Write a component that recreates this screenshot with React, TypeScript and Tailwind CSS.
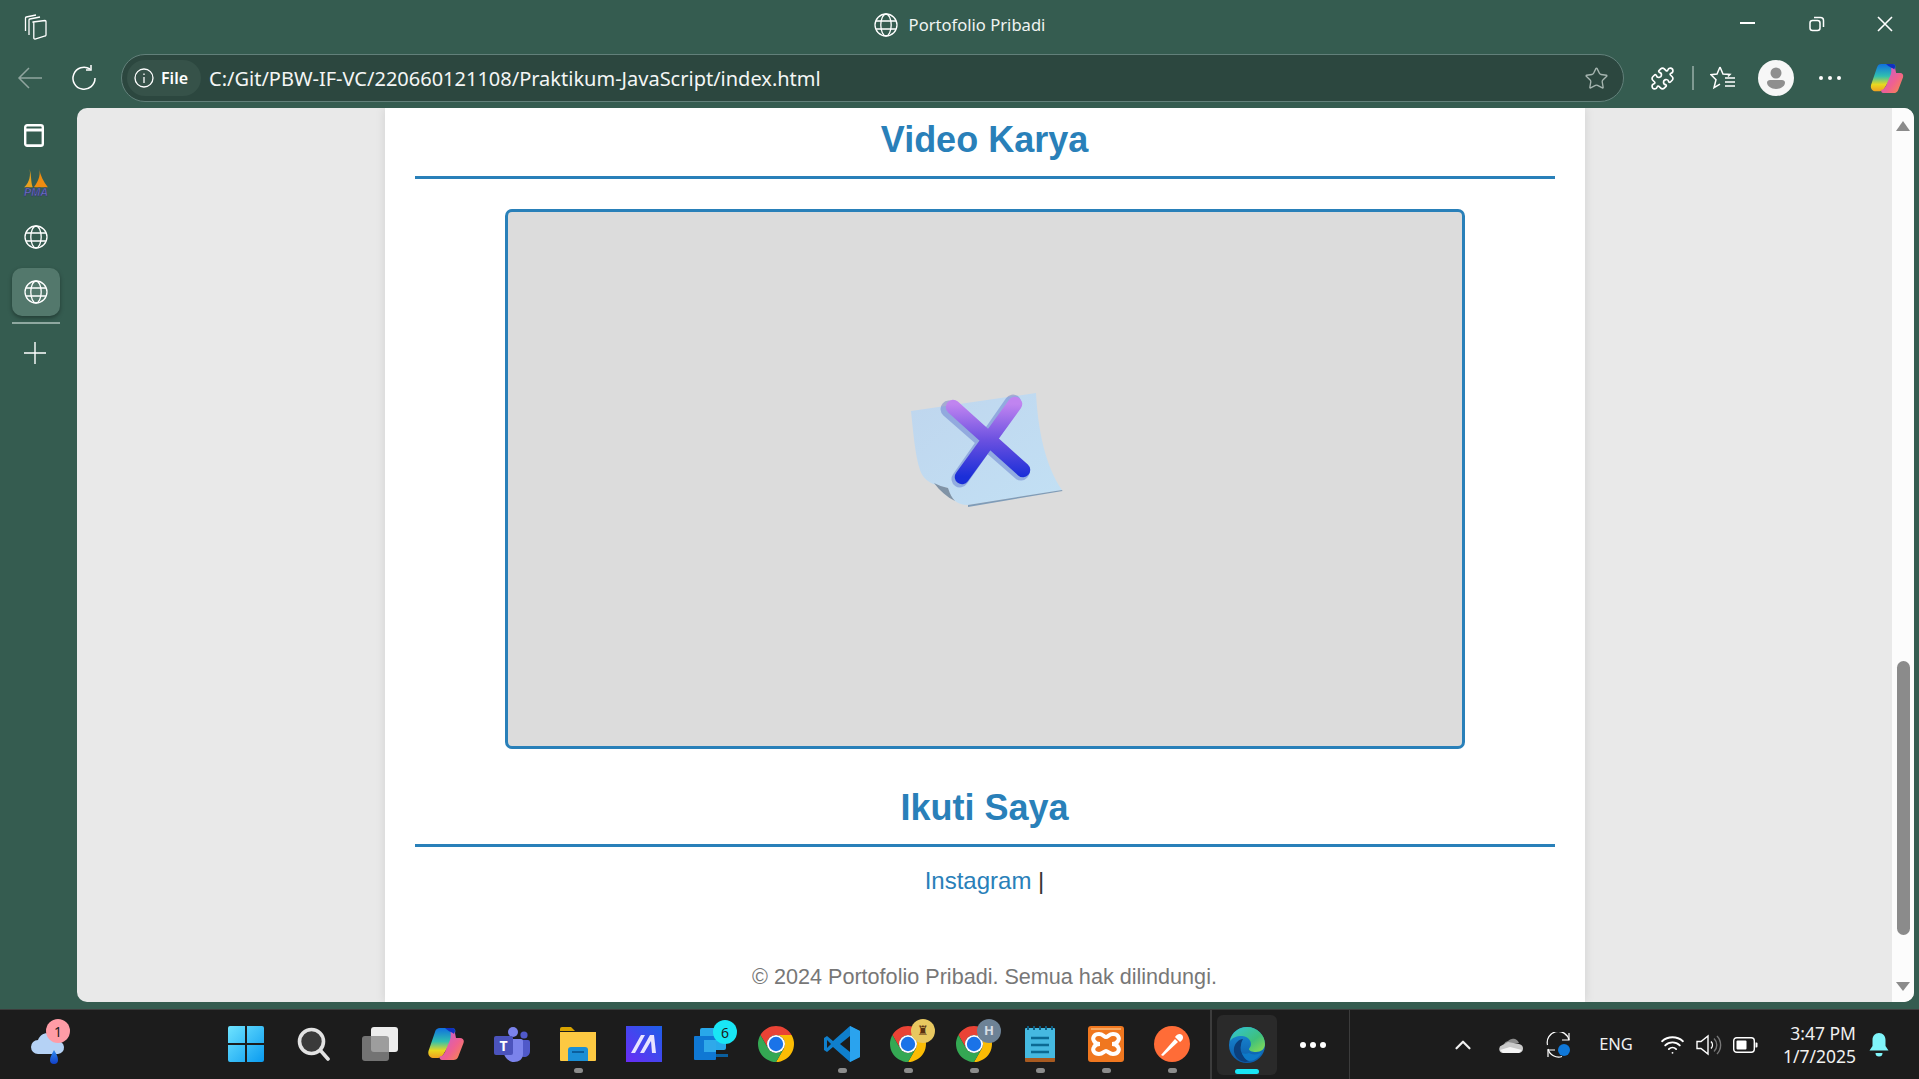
import React from "react";
import { Puzzle, Star, ChevronUp, Wifi } from "lucide-react";

const uiFont = "font-['Noto_Sans',sans-serif]";

const Globe = ({ size = 24 }: { size?: number }) => (
	<svg width={size} height={size} viewBox="0 0 24 24" fill="none" stroke="white" strokeWidth="1.3">
		<circle cx="12" cy="12" r="11" />
		<ellipse cx="12" cy="12" rx="5.2" ry="11" />
		<path d="M2 8h20M2 16h20" />
	</svg>
);

const ChromeIcon = () => (
	<svg width="36" height="36" viewBox="4 4 40 40">
		<path d="M6.68 14A20 20 0 0 1 41.32 14L24 14A10 10 0 0 0 15.34 29Z" fill="#ea4335" />
		<path d="M41.32 14A20 20 0 0 1 24 44L32.66 29A10 10 0 0 0 24 14Z" fill="#fbbc04" />
		<path d="M24 44A20 20 0 0 1 6.68 14L15.34 29A10 10 0 0 0 32.66 29Z" fill="#34a853" />
		<circle cx="24" cy="24" r="10" fill="white" />
		<circle cx="24" cy="24" r="8" fill="#1a73e8" />
	</svg>
);

const CopilotIcon = ({ id, w, h }: { id: string; w: number; h: number }) => (
	<svg width={w} height={h} viewBox="0 0 36 34">
		<defs>
			<linearGradient id={id + "a"} x1="0" y1="0" x2="0" y2="1">
				<stop offset="0" stopColor="#0f6fe0" />
				<stop offset="0.45" stopColor="#30c0b0" />
				<stop offset="0.75" stopColor="#e8d820" />
				<stop offset="1" stopColor="#f0a020" />
			</linearGradient>
			<linearGradient id={id + "b"} x1="0" y1="0" x2="1" y2="1">
				<stop offset="0" stopColor="#b060e8" />
				<stop offset="0.6" stopColor="#f06090" />
				<stop offset="1" stopColor="#f89040" />
			</linearGradient>
		</defs>
		<path d="M12 1h12c3 0 4 2 3 5l-3 7-9 15c-1 2-3 3-5 3H6C2 31-.5 28 .5 24L7 5c.8-3 2.5-4 5-4z" fill={`url(#${id}a)`} />
		<path d="M22 1c3 0 4 2 5 5l1 5h4c3 0 4.5 2 3.5 5l-5 13c-1 3-3 4-5 4H14c-2 0-3-2-2-4 2 1 3-1 5-4l5-12c1-3 1-6 0-12z" fill={`url(#${id}b)`} />
		<path d="M17 1h7c2 0 3 1 3 3l-1 3c-2-2-5-2-9-6z" fill="#1030c0" />
	</svg>
);

const EdgeIcon = () => (
	<svg width="36" height="36" viewBox="0 0 36 36">
		<defs>
			<linearGradient id="edgeA" x1="0" y1="0" x2="1" y2="1">
				<stop offset="0" stopColor="#31c4d8" />
				<stop offset="0.6" stopColor="#3fc07c" />
				<stop offset="1" stopColor="#8ede50" />
			</linearGradient>
			<linearGradient id="edgeB" x1="0" y1="0" x2="0" y2="1">
				<stop offset="0" stopColor="#1a8ed8" />
				<stop offset="1" stopColor="#0c5aa8" />
			</linearGradient>
		</defs>
		<circle cx="18" cy="18" r="18" fill="url(#edgeB)" />
		<path d="M1 14C3 5 10 0 18 0c10 0 18 8 18 17 0 5-4 8-9 8-4 0-7-1-7-3 0-1 2-2 2-5 0-4-4-8-9-8-6 0-10 2-12 5z" fill="url(#edgeA)" />
		<path d="M12 18c-2 7 3 14 10 15-2 1-3 2-6 2C8 34 4 27 5 21c1-5 5-9 9-9-1 2-2 4-2 6z" fill="#0b3f7c" />
		<path d="M20 26c3 2 9 2 13-1-3 6-8 9-13 9-4-1-6-5-7-8 2 1 5 1 7 0z" fill="#0e7ac8" />
	</svg>
);

// slot on the taskbar, icons are 66px apart
const AppSlot = ({ children, running, badge }: { children: React.ReactNode; running?: boolean; badge?: React.ReactNode }) => (
	<div className="relative flex h-full w-[66px] shrink-0 items-center justify-center pb-[1px]">
		{children}
		{badge}
		{running && <span className="absolute bottom-[6px] h-[5px] w-[9px] rounded-full bg-[#8c8c8c]" />}
	</div>
);

const WindowsIcon = () => (
	<svg width="36" height="36" viewBox="0 0 36 36">
		<defs>
			<linearGradient id="win" x1="0" y1="0" x2="1" y2="1">
				<stop offset="0" stopColor="#6fe4ff" />
				<stop offset="1" stopColor="#0a9bf0" />
			</linearGradient>
		</defs>
		<path d="M2 0h15v17H0V2a2 2 0 0 1 2-2zM19 0h15a2 2 0 0 1 2 2v15H19zM0 19h17v17H2a2 2 0 0 1-2-2zM19 19h17v15a2 2 0 0 1-2 2H19z" fill="url(#win)" />
	</svg>
);

const SearchIcon = () => (
	<svg width="34" height="34" viewBox="0 0 34 34" fill="none" stroke="#e2e2e2">
		<circle cx="14.500" cy="14.500" r="12" strokeWidth="3.600" fill="#3a3a3a" />
		<path d="M23.500 23.500 31 32" strokeWidth="3.600" strokeLinecap="round" />
	</svg>
);

const TeamsIcon = () => (
	<svg width="36" height="36" viewBox="0 0 36 36">
		<circle cx="19" cy="6" r="5" fill="#7b83eb" />
		<circle cx="30" cy="9" r="3.6" fill="#5059c9" />
		<path d="M25 14h9a2 2 0 0 1 2 2v9c0 4-3 6-6 6s-5-1-6-3z" fill="#5059c9" />
		<path d="M10 13h17a2 2 0 0 1 2 2v13c0 5-4 8-9 8s-9-4-10-8z" fill="#7b83eb" />
		<rect x="0" y="10" width="19" height="19" rx="2" fill="#4b53bc" />
		<text x="9.5" y="25" fontSize="14" fontWeight="700" fill="white" textAnchor="middle" fontFamily="Noto Sans">T</text>
	</svg>
);

const FolderIcon = () => (
	<svg width="36" height="36" viewBox="0 0 36 36">
		<path d="M0 3a2 2 0 0 1 2-2h9l4 4h-15z" fill="#d9a300" />
		<path d="M0 6h36v28a1 1 0 0 1-1 1H1a1 1 0 0 1-1-1z" fill="#fdc942" />
		<path d="M8 24a3 3 0 0 1 3-3h14a3 3 0 0 1 3 3v11H8z" fill="#1b8fd6" />
		<rect x="12" y="25" width="12" height="2" fill="#0b5f9c" />
	</svg>
);

const MicaIcon = () => (
	<svg width="36" height="36" viewBox="0 0 36 36">
		<defs>
			<linearGradient id="mica" x1="0" y1="1" x2="1" y2="0">
				<stop offset="0" stopColor="#6a2cf5" />
				<stop offset="1" stopColor="#1d5fe8" />
			</linearGradient>
		</defs>
		<rect width="36" height="36" fill="url(#mica)" />
		<path d="M5 27 15 9h4L9 27zM14 27 24 9h4l2 18h-4l-1-12-7 12z" fill="#e8e4ff" />
	</svg>
);

const MailIcon = () => (
	<svg width="36" height="36" viewBox="0 0 36 36">
		<rect x="8" y="2" width="26" height="22" rx="2" fill="#28a8ea" />
		<path d="M8 28h28v3H8z" fill="#0a5f9e" />
		<rect x="2" y="10" width="22" height="24" rx="1" fill="#0f78d4" />
		<rect x="12" y="14" width="12" height="12" fill="#50d9ff" opacity=".5" />
	</svg>
);

const VsCodeIcon = () => (
	<svg width="36" height="36" viewBox="0 0 36 36">
		<path d="M26 0l10 5v26l-10 5-17-15-6 5-3-2V12l3-2 6 5z" fill="#0f7fcc" />
		<path d="M26 0l10 5v26l-10 5z" fill="#2aa3ee" />
		<path d="M26 10v16l-10-8z" fill="#1c1c1c" />
		<path d="M3 14v8l4-4z" fill="#1c1c1c" />
	</svg>
);

const NotepadIcon = () => (
	<svg width="30" height="36" viewBox="0 0 30 36">
		<rect y="2" width="30" height="31" rx="1" fill="#45b9e0" />
		<path d="M0 32h30v3a1 1 0 0 1-1 1H1a1 1 0 0 1-1-1z" fill="#a85a20" />
		<path d="M3 0v4M9 0v4M15 0v4M21 0v4M27 0v4" stroke="#0f5c80" strokeWidth="2" />
		<path d="M6 12h18M6 19h18M6 26h18" stroke="#0b6a92" strokeWidth="2.4" />
	</svg>
);

const XamppIcon = () => (
	<svg width="36" height="36" viewBox="0 0 36 36">
		<rect width="36" height="36" rx="3" fill="#f0771f" />
		<rect x="3" y="2" width="30" height="2" fill="#f9a860" />
		<path d="M11 8c4 0 5 3 7 3s3-3 7-3c5 0 7 4 5 7-1 2-3 3-6 3 3 0 5 1 6 3 2 3 0 7-5 7-4 0-5-3-7-3s-3 3-7 3c-5 0-7-4-5-7 1-2 3-3 6-3-3 0-5-1-6-3-2-3 0-7 5-7z" fill="none" stroke="white" strokeWidth="4" />
	</svg>
);

const PostmanIcon = () => (
	<svg width="36" height="36" viewBox="0 0 36 36">
		<circle cx="18" cy="18" r="18" fill="#ff6c37" />
		<path d="M7 29 21 13l3 3L9 30z" fill="white" />
		<path d="M21 11c2-3 5-4 7-2s1 5-2 7z" fill="white" />
	</svg>
);

const DocError = () => (
	<svg width="190" height="140" viewBox="0 0 190 140" className="mb-[58px]">
		<defs>
			<linearGradient id="sheet" x1="0" y1="0" x2="1" y2="1">
				<stop offset="0" stopColor="#bfd6ee" />
				<stop offset="1" stopColor="#c2e0f4" />
			</linearGradient>
			<linearGradient id="cross" x1="0" y1="0" x2="0" y2="1">
				<stop offset="0" stopColor="#c084f0" />
				<stop offset="0.5" stopColor="#6a50e0" />
				<stop offset="1" stopColor="#1a2ed8" />
			</linearGradient>
		</defs>
		<path d="M58 108C48 106 35 104 30 90 25 75 23 50 21 31L146 13C148 50 155 85 172 110L78 125C66 125 60 118 58 108z" fill="url(#sheet)" />
		<path d="M78 125 172 110 172.500 111 78 127z" fill="#7f9cb8" />
		<path d="M44 103C48 105 53 107 58 108 60 114 62 118 65 121 57 117 50 111 44 103z" fill="#8093a6" />
		<path d="M61 27 133 90M125 21 72 97" stroke="#2a3fb8" strokeWidth="17" strokeLinecap="round" opacity=".3" transform="translate(-2 2)" />
		<path d="M63 27 133 90M125 24 72 97" stroke="url(#cross)" strokeWidth="14.500" strokeLinecap="round" />
	</svg>
);

const App = () => {
	return (
		<div className={`flex h-screen w-full flex-col overflow-hidden bg-[#355c50] text-white ${uiFont}`}>
			{/* Title bar */}
			<div className="grid h-[54px] shrink-0 grid-cols-[1fr_auto_1fr] items-center">
				<div className="pl-[24px]">
					<svg width="24" height="26" viewBox="0 0 24 26" fill="none" stroke="white" strokeWidth="1.3">
						<path d="M9 8l12-1.5a1 1 0 0 1 1 1V21a1 1 0 0 1-.8 1L11 25a1 1 0 0 1-1.2-1V9a1 1 0 0 1-.8-1z" />
						<path d="M5 21V6a1 1 0 0 1 .8-1L16 3" />
						<path d="M1.5 17V4a1 1 0 0 1 .8-1L12 1" />
					</svg>
				</div>
				<div className="flex items-center gap-[11px] pb-[4px] text-[16.6px] text-[#f0f4f2]">
					<Globe />
					<span>Portofolio Pribadi</span>
				</div>
				<div className="flex items-center justify-end">
					<div className="flex h-[54px] w-[68px] items-center justify-center pb-[8px] pr-[4px]"><span className="h-[2px] w-[15px] bg-white" /></div>
					<div className="flex h-[54px] w-[68px] items-center justify-center pb-[6px]">
						<svg width="16" height="16" viewBox="0 0 16 16" fill="none" stroke="white" strokeWidth="1.5">
							<rect x="1" y="4.5" width="10" height="10" rx="2.5" />
							<path d="M5 1.5h6.5a3 3 0 0 1 3 3V11" />
						</svg>
					</div>
					<div className="flex h-[54px] w-[68px] items-center justify-center pb-[6px]">
						<svg width="16" height="16" viewBox="0 0 16 16" stroke="white" strokeWidth="1.6"><path d="M1 1l14 14M15 1 1 15" /></svg>
					</div>
				</div>
			</div>

			{/* Toolbar */}
			<div className="flex h-[54px] shrink-0 items-start">
				<div className="flex h-[48px] w-[57px] items-center justify-center pl-[3px]">
					<svg width="26" height="24" viewBox="0 0 26 24" fill="none" stroke="white" strokeOpacity=".45" strokeWidth="1.5"><path d="M25 12H2M12 2 2 12l10 10" /></svg>
				</div>
				<div className="flex h-[48px] w-[54px] items-center justify-center">
					<svg width="26" height="26" viewBox="0 0 26 26" fill="none" stroke="white" strokeWidth="1.5">
						<path d="M19 4A11 11 0 1 0 24 13" />
						<path d="M20 0v5h-5" />
					</svg>
				</div>
				<div className="ml-[10px] flex h-[48px] w-[1503px] items-center rounded-full border-[1.5px] border-[#62807a] bg-[#2c473f] pl-[5px] pr-[14px]">
					<div className="flex h-[36px] w-[74px] items-center gap-[7px] rounded-full bg-[#365249] pl-[7px]">
						<svg width="20" height="20" viewBox="0 0 20 20" fill="none" stroke="white" strokeWidth="1.3" className="shrink-0">
							<circle cx="10" cy="10" r="9" />
							<path d="M10 9v6M10 5.5v1.5" />
						</svg>
						<span className="text-[16px] font-semibold">File</span>
					</div>
					<span className="ml-[8px] pt-[1px] text-[20px] text-[#f4f6f5]">C:/Git/PBW-IF-VC/220660121108/Praktikum-JavaScript/index.html</span>
					<Star className="ml-auto text-[#a6b5b0]" size={25} strokeWidth={1.3} />
				</div>
				<div className="flex h-[48px] w-[68px] items-center justify-center pl-[8px]">
					<Puzzle size={25} strokeWidth={1.6} />
				</div>
				<span className="mt-[12px] h-[24px] w-[1.5px] bg-[#7f9a92]" />
				<div className="flex h-[48px] w-[58px] items-center justify-center">
					<svg width="26" height="24" viewBox="0 0 26 24" fill="none" stroke="white" strokeWidth="1.5">
						<path d="M10 1l3 7 7 .5-2 2M10 1 7 8l-6 .7 5 5-2 8 6-3.5" />
						<path d="M15 12h10M15 16h10M15 20h10" />
					</svg>
				</div>
				<div className="ml-[6px] mb-[6px] flex h-[36px] w-[36px] items-center justify-center self-center rounded-full bg-[#f7f7f7]">
					<svg width="24" height="24" viewBox="0 0 24 24" fill="#8f8f8f">
						<circle cx="12" cy="7" r="5.5" />
						<path d="M3 16.5c0-1.5 1.5-2.5 3-2.5h12c1.500 0 3 1 3 2.500C21 20 17 23 12 23S3 20 3 16.500z" />
					</svg>
				</div>
				<div className="flex h-[48px] w-[72px] items-center justify-center gap-[5px]">
					<span className="h-[4px] w-[4px] rounded-full bg-white" />
					<span className="h-[4px] w-[4px] rounded-full bg-white" />
					<span className="h-[4px] w-[4px] rounded-full bg-white" />
				</div>
				<div className="flex h-[48px] w-[42px] items-center justify-center">
					<CopilotIcon id="top" w={34} h={31} />
				</div>
			</div>

			{/* Main area */}
			<div className="flex min-h-0 flex-1">
				<div className="flex w-[77px] shrink-0 flex-col items-center pr-[5px]">
					<div className="mr-[4px] mt-[15px] flex h-[24px] w-[24px] items-center justify-center">
						<svg width="20" height="23" viewBox="0 0 20 23" fill="none" stroke="white" strokeWidth="2.4">
							<rect x="1.200" y="1.200" width="17.600" height="20.600" rx="2" />
							<path d="M1 6h18" strokeWidth="3" />
							<path d="M3 21.500h14" strokeWidth="2" />
						</svg>
					</div>
					<div className="mt-[22px] h-[28px] w-[26px]">
						<svg width="26" height="28" viewBox="0 0 24 26">
							<path d="M6 0c1 5 .5 12-5 17h8C7 12 8 6 6 0z" fill="#e8a020" />
							<path d="M15 0c1 4 .5 10-5 17h13c-4-5-7-11-8-17z" fill="#f08c10" />
							<text x="12" y="25" fontSize="10" fontWeight="700" fontStyle="italic" fill="#6f6fc8" stroke="#2c2f6a" strokeWidth=".4" textAnchor="middle" fontFamily="Liberation Sans">PMA</text>
						</svg>
					</div>
					<div className="mt-[28px] h-[24px]"><Globe /></div>
					<div className="mt-[19px] flex h-[48px] w-[48px] items-center justify-center rounded-[10px] bg-[#53786c] shadow-[0_2px_4px_rgba(0,0,0,0.35)]"><Globe /></div>
					<span className="mt-[6px] h-[2px] w-[48px] bg-[#8fa8a0]" />
					<svg width="22" height="22" viewBox="0 0 22 22" stroke="white" strokeWidth="1.4" className="mr-[3px] mt-[18px]"><path d="M11 0v22M0 11h22" /></svg>
				</div>

				<div className="mb-[7px] mr-[5px] flex min-w-0 flex-1 overflow-hidden rounded-[10px] bg-[#e9e9e9]">
					<div className="flex min-w-0 flex-1 justify-center">
						<div className="h-full w-[1200px] shrink-0 bg-white px-[30px] pt-[11px] text-center font-['Liberation_Sans',Arial,sans-serif] shadow-[0_0_10px_rgba(0,0,0,0.1)]">
							<h2 className="border-b-[3px] border-[#2980b9] pb-[16px] text-[36px] leading-[41px] font-bold text-[#2980b9]">Video Karya</h2>
							<div className="mx-auto mt-[30px] flex h-[540px] w-[960px] items-center justify-center rounded-[7px] border-[3px] border-[#2980b9] bg-[#dcdcdc]">
								<DocError />
							</div>
							<h2 className="mt-[38px] border-b-[3px] border-[#2980b9] pb-[16px] text-[36px] leading-[41px] font-bold text-[#2980b9]">Ikuti Saya</h2>
							<p className="mt-[20px] text-[24px] leading-[28px] text-[#333333]">
								<a className="text-[#2980b9]">Instagram</a> |
							</p>
							<p className="mt-[70px] text-[21.6px] leading-[24px] text-[#777777]">© 2024 Portofolio Pribadi. Semua hak dilindungi.</p>
						</div>
					</div>
					{/* Scrollbar */}
					<div className="flex w-[22px] shrink-0 flex-col items-center bg-[#fcfcfc] pb-[11px] pt-[13px]">
						<span className="h-0 w-0 border-x-[7px] border-b-[10px] border-x-transparent border-b-[#8b8b8b]" />
						<span className="mt-auto h-[274px] w-[13px] rounded-full bg-[#8b8b8b]" />
						<span className="mt-[47px] h-0 w-0 border-x-[7px] border-t-[9px] border-x-transparent border-t-[#8b8b8b]" />
					</div>
				</div>
			</div>

			{/* Taskbar */}
			<div className="flex h-[70px] shrink-0 items-center border-t-[1.5px] border-[#3c3c3c] bg-[#1c1c1c]">
				<div className="relative flex h-full w-[213px] shrink-0 items-center pl-[30px]">
					<svg width="36" height="32" viewBox="0 0 36 32" className="mt-[6px]">
						<defs>
							<linearGradient id="rain" x1="0" y1="0" x2="0" y2="1">
								<stop offset="0" stopColor="#2f8cf0" />
								<stop offset="1" stopColor="#1240c8" />
							</linearGradient>
						</defs>
						<path d="M8 22a7 7 0 0 1 0-14c2-5 7-8 12-6 4 1 6 4 7 7a6.500 6.500 0 0 1 1 13z" fill="#b5d2f5" />
						<path d="M24 18c3 5 4 7 4 10a4 4 0 0 1-8 0c0-3 2-6 4-10z" fill="url(#rain)" />
					</svg>
					<span className="absolute left-[46px] top-[9px] flex h-[24px] w-[24px] items-center justify-center rounded-full bg-[#ff9ca6] text-[14px] text-[#1c1c1c]">1</span>
				</div>
				<AppSlot><WindowsIcon /></AppSlot>
				<span className="w-[2px] shrink-0" />
				<AppSlot><SearchIcon /></AppSlot>
				<AppSlot>
					<div className="relative h-[34px] w-[36px]">
						<span className="absolute right-0 top-0 h-[25px] w-[27px] rounded-[3px] bg-[#ececec]" />
						<span className="absolute bottom-0 left-0 h-[25px] w-[27px] rounded-[3px] bg-[#8a8a8a]/80" />
					</div>
				</AppSlot>
				<AppSlot><CopilotIcon id="bar" w={36} h={34} /></AppSlot>
				<AppSlot><TeamsIcon /></AppSlot>
				<AppSlot running><FolderIcon /></AppSlot>
				<AppSlot><MicaIcon /></AppSlot>
				<AppSlot badge={<span className="absolute left-[36px] top-[10px] flex h-[24px] w-[24px] items-center justify-center rounded-full bg-[#19e6f5] text-[14px] text-[#1c1c1c]">6</span>}><MailIcon /></AppSlot>
				<AppSlot><ChromeIcon /></AppSlot>
				<AppSlot running><VsCodeIcon /></AppSlot>
				<AppSlot running badge={<span className="absolute left-[36px] top-[9px] flex h-[24px] w-[24px] items-center justify-center rounded-full bg-[#e8c860] text-[13px] text-[#5a3010]">♜</span>}><ChromeIcon /></AppSlot>
				<AppSlot running badge={<span className="absolute left-[36px] top-[9px] flex h-[24px] w-[24px] items-center justify-center rounded-full bg-[#6d8296] text-[13px] font-bold text-[#d5dde5]">H</span>}><ChromeIcon /></AppSlot>
				<AppSlot running><NotepadIcon /></AppSlot>
				<AppSlot running><XamppIcon /></AppSlot>
				<AppSlot running><PostmanIcon /></AppSlot>
				<span className="ml-[5px] h-full w-[1.5px] shrink-0 bg-[#3c3c3c]" />
				<div className="relative ml-[5px] flex h-[60px] w-[60px] shrink-0 items-center justify-center rounded-[6px] bg-[#2a2a2a]">
					<EdgeIcon />
					<span className="absolute bottom-[1px] h-[5px] w-[24px] rounded-full bg-[#19e6f5]" />
				</div>
				<div className="flex w-[72px] shrink-0 items-center justify-center gap-[4px] pl-[1px]">
					<span className="h-[6px] w-[6px] rounded-full bg-white" />
					<span className="h-[6px] w-[6px] rounded-full bg-white" />
					<span className="h-[6px] w-[6px] rounded-full bg-white" />
				</div>
				<span className="h-full w-[1.5px] shrink-0 bg-[#3c3c3c]" />

				{/* Tray */}
				<div className="ml-auto flex h-full items-center pr-[18px]">
					<div className="flex w-[46px] justify-center"><ChevronUp size={26} strokeWidth={2} className="text-[#f0f0f0]" /></div>
					<div className="flex w-[50px] justify-center">
						<svg width="24" height="16" viewBox="0 0 24 16">
							<path d="M5 7a5 5 0 0 1 4-3 6.500 6.500 0 0 1 11 2z" fill="#8c8c8c" />
							<path d="M4 16a4 4 0 0 1-1-7.800L9 5l11 2c3 .5 4 2.500 4 4.500a4.500 4.500 0 0 1-4 4.500z" fill="#c9c9c9" />
							<path d="M1 13l10-3 12 3-3 3H4z" fill="#f4f4f4" />
						</svg>
					</div>
					<div className="flex w-[46px] justify-center">
						<svg width="26" height="26" viewBox="0 0 26 26" fill="none" stroke="white" strokeWidth="1.2">
							<path d="M1.500 13A11 11 0 0 1 23 8" />
							<path d="M23 1v7h-7" />
							<path d="M2 17a11 11 0 0 0 14 7.500" />
							<path d="M2 25v-7h7" />
							<circle cx="18" cy="18" r="6" fill="#0f78d9" stroke="none" />
						</svg>
					</div>
					<span className="flex w-[68px] justify-center text-[16.5px] text-[#f0f0f0]">ENG</span>
					<div className="flex w-[41px] justify-center pl-[3px]"><Wifi size={25} strokeWidth={1.8} /></div>
					<div className="flex w-[35px] justify-center">
						<svg width="26" height="24" viewBox="0 0 26 24" fill="none" stroke="white" strokeWidth="1.400">
							<path d="M1 8.500v7h4l7 5.500V3L5 8.500z" />
							<path d="M15 8.500a5 5 0 0 1 0 7" />
							<path d="M18 5.500a9 9 0 0 1 0 13M21 3a13 13 0 0 1 0 18" stroke="#777" />
						</svg>
					</div>
					<div className="flex w-[38px] justify-center">
						<svg width="25" height="16" viewBox="0 0 25 16" fill="none">
							<rect x=".7" y=".7" width="20.600" height="14.600" rx="3" stroke="white" strokeWidth="1.400" />
							<rect x="3.500" y="3.500" width="10" height="9" rx="1" fill="white" />
							<path d="M22.500 5.500h1a1 1 0 0 1 1 1v3a1 1 0 0 1-1 1h-1z" fill="white" />
						</svg>
					</div>
					<div className="flex w-[92px] flex-col items-end text-[17.5px] leading-[23px] text-[#f0f0f0]">
						<span>3:47 PM</span>
						<span>1/7/2025</span>
					</div>
					<div className="flex w-[45px] justify-center">
						<svg width="20" height="24" viewBox="0 0 20 24" fill="#7ff5fa">
							<path d="M10 0c4 0 6.500 3 6.500 7v6l3 4.500H.5l3-4.500V7C3.500 3 6 0 10 0z" />
							<path d="M6.500 20h7a3.500 3.500 0 0 1-7 0z" />
						</svg>
					</div>
				</div>
			</div>
		</div>
	);
};

export default App;
